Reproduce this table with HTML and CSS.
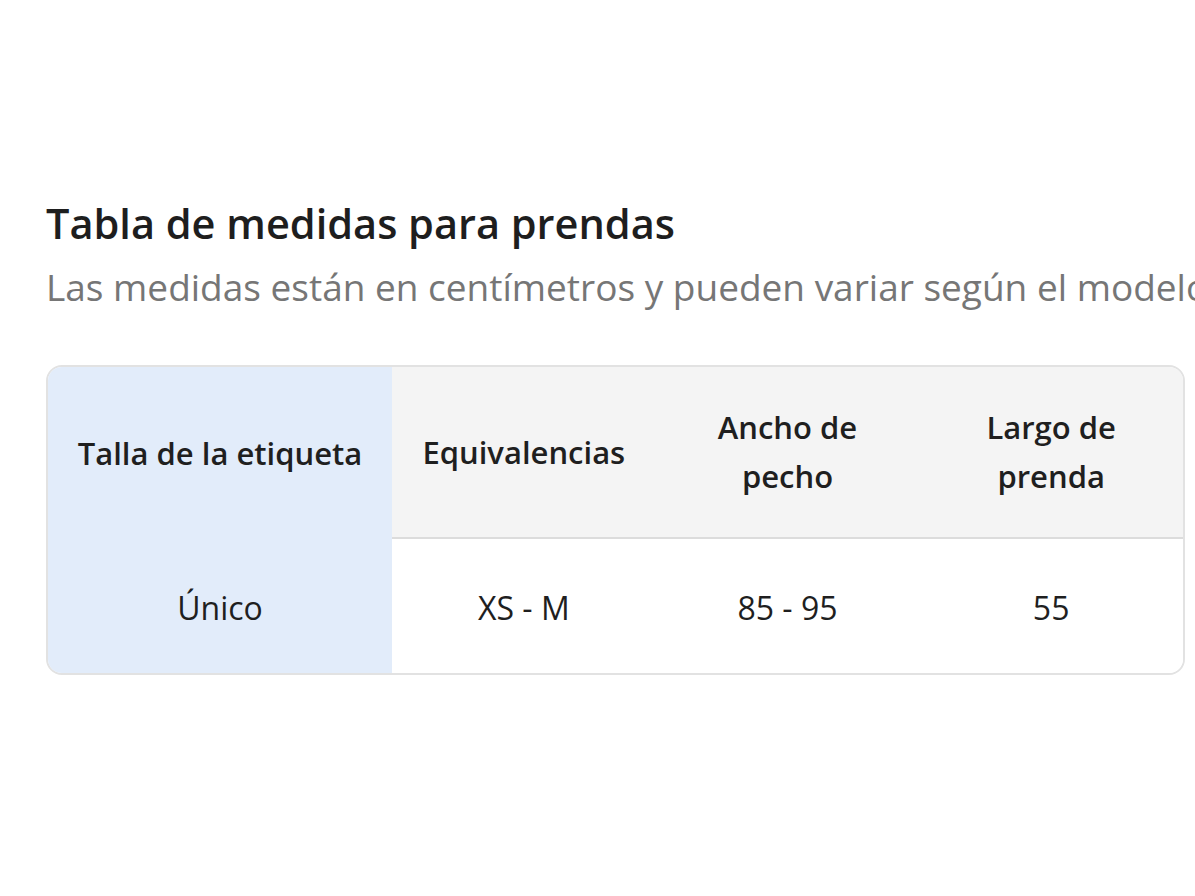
FILE: index.html
```html
<!DOCTYPE html>
<html lang="es">
<head>
<meta charset="utf-8">
<title>Tabla de medidas</title>
<link rel="stylesheet" href="styles.css">
</head>
<body>
<main class="page">
  <h1 class="title">Tabla de medidas para prendas</h1>
  <p class="subtitle">Las medidas están en centímetros y pueden variar según el modelo.</p>
  <div class="table">
    <div class="cell head first">Talla de la etiqueta</div>
    <div class="cell head">Equivalencias</div>
    <div class="cell head">Ancho de<br>pecho</div>
    <div class="cell head">Largo de<br>prenda</div>
    <div class="cell body first">Único</div>
    <div class="cell body">XS - M</div>
    <div class="cell body">85 - 95</div>
    <div class="cell body">55</div>
  </div>
</main>
</body>
</html>
```

FILE: styles.css
```css
html, body {
  margin: 0;
  padding: 0;
  background: #ffffff;
  overflow: hidden;
}
.page {
  padding: 194px 0 0 46px;
  font-family: "Open Sans", Lato, sans-serif;
  color: #1c1c1c;
  white-space: nowrap;
}
.title {
  margin: 0;
  font-size: 41.5px;
  line-height: 58px;
  font-weight: 600;
  color: #1e1e1e;
}
.subtitle {
  margin: 5px 0 0;
  font-size: 37px;
  line-height: 60px;
  color: #767676;
  font-weight: 400;
}
.table {
  margin-top: 48px;
  width: 1139px;
  box-sizing: border-box;
  border: 2px solid #e2e2e2;
  border-radius: 16px;
  overflow: hidden;
  display: grid;
  grid-template-columns: 344px repeat(3, 1fr);
  grid-template-rows: 172px 134px;
}
.cell {
  display: flex;
  align-items: center;
  justify-content: center;
  text-align: center;
  line-height: 49px;
  color: #1f1f1f;
}
.head {
  background: #f4f4f4;
  font-size: 31px;
  font-weight: 600;
  border-bottom: 2px solid #dcdcdc;
}
.body {
  background: #ffffff;
  font-size: 32px;
  font-weight: 400;
  padding-top: 2px;
}
.first {
  background: #e2ecfa;
  border-bottom: none;
}
```
